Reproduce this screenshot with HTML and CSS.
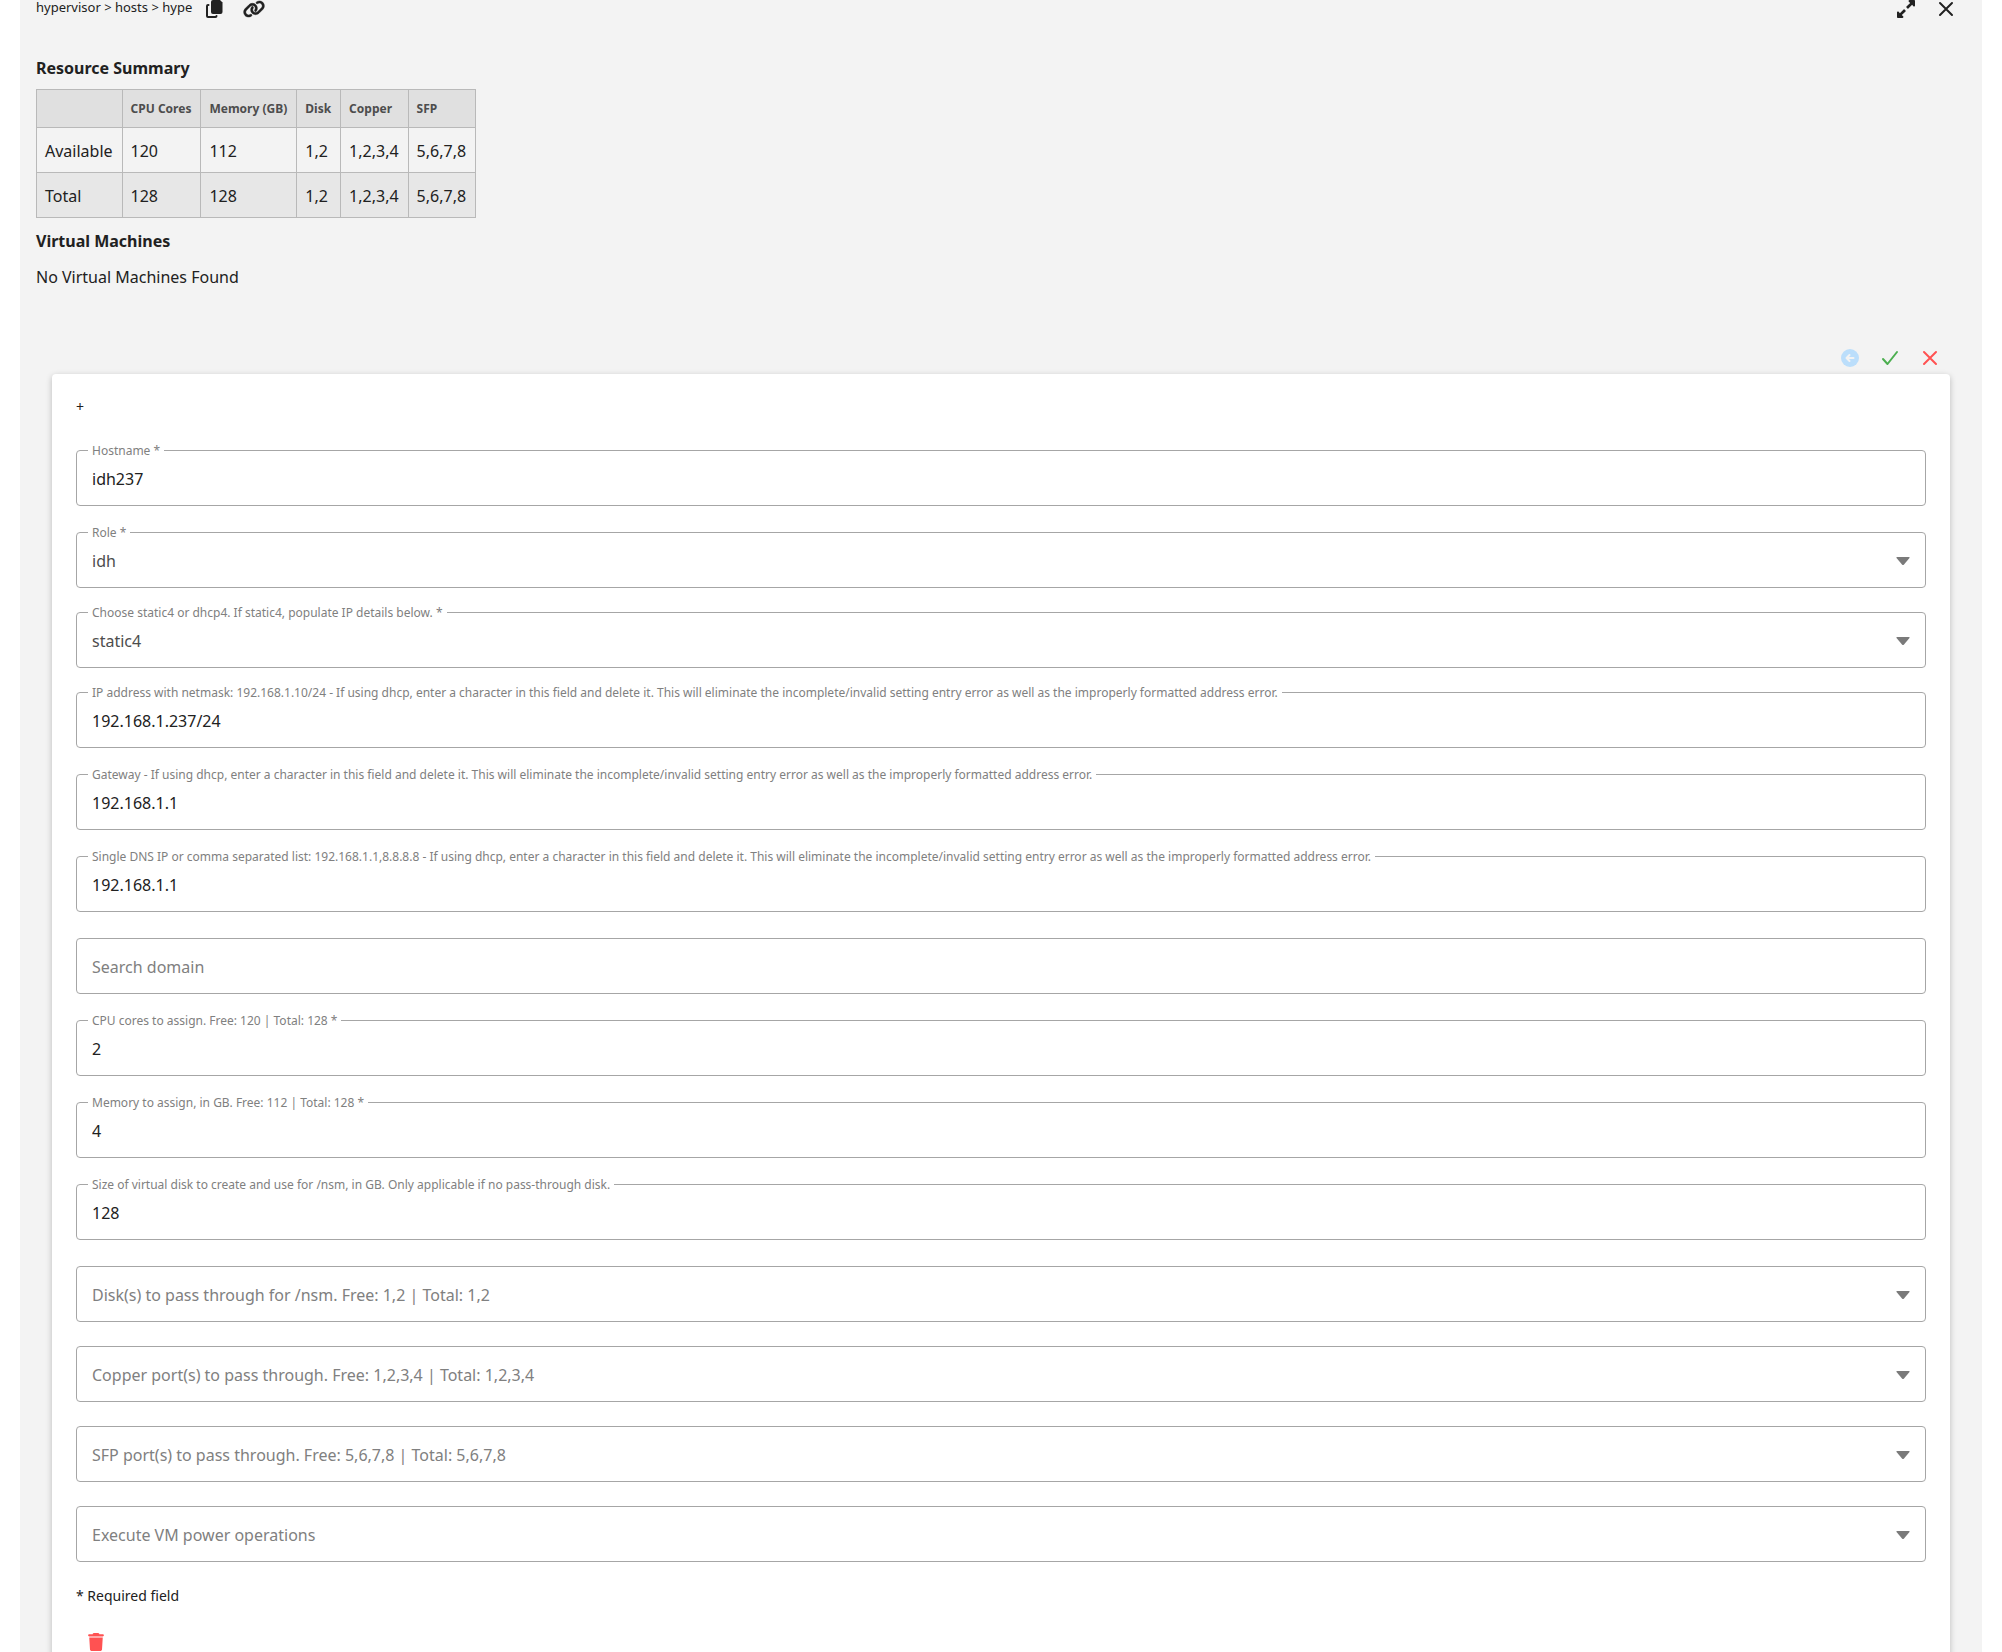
FILE: index.html
```html
<!DOCTYPE html>
<html lang="en">
<head>
  <meta charset="UTF-8">
  <meta name="viewport" content="width=device-width, initial-scale=1">
  <title>Hypervisor Configuration</title>
  <link rel="stylesheet" href="styles.css">
</head>
<body>
  <main class="panel">
    <header class="topbar">
      <span class="setting-path">hypervisor &gt; hosts &gt; hype</span>
      <button class="icon-btn" type="button" aria-label="Copy">
        <svg class="icon" viewBox="0 0 18 18"><path d="M8 0h7l2.500 2.500V12a2 2 0 0 1-2 2H8a2 2 0 0 1-2-2V2a2 2 0 0 1 2-2z"/><path class="stroke" d="M3.500 5H3a1 1 0 0 0-1 1v10a1 1 0 0 0 1 1h7.500a1 1 0 0 0 1-1"/></svg>
      </button>
      <button class="icon-btn" type="button" aria-label="Link">
        <svg class="icon icon-wide" viewBox="0 0 640 512"><path stroke="currentColor" stroke-width="12" d="M579.800 267.700c56.500-56.500 56.500-148 0-204.500c-50-50-128.800-56.500-186.300-15.400l-1.600 1.100c-14.400 10.300-17.700 30.300-7.400 44.600s30.300 17.700 44.600 7.400l1.600-1.100c32.100-22.900 76-19.300 103.800 8.600c31.500 31.500 31.500 82.500 0 114L422.300 334.800c-31.500 31.500-82.500 31.500-114 0c-27.900-27.900-31.500-71.800-8.600-103.800l1.100-1.600c10.300-14.400 6.900-34.400-7.400-44.600s-34.400-6.900-44.600 7.400l-1.100 1.600C206.500 251.200 213 330 263 380c56.500 56.500 148 56.500 204.500 0L579.800 267.700zM60.200 244.300c-56.500 56.500-56.500 148 0 204.500c50 50 128.800 56.500 186.300 15.400l1.600-1.100c14.400-10.300 17.700-30.300 7.400-44.600s-30.300-17.700-44.600-7.400l-1.600 1.100c-32.100 22.900-76 19.300-103.800-8.600C74 372 74 321 105.500 289.500L217.700 177.200c31.500-31.500 82.500-31.500 114 0c27.900 27.900 31.500 71.800 8.600 103.900l-1.100 1.600c-10.300 14.400-6.900 34.400 7.400 44.600s34.400 6.900 44.600-7.400l1.100-1.600C433.500 260.800 427 182 377 132c-56.500-56.500-148-56.500-204.500 0L60.200 244.300z"/></svg>
      </button>
      <span class="spacer"></span>
      <button class="icon-btn" type="button" aria-label="Expand">
        <svg class="icon" viewBox="0 32 448 448"><path d="M212.686 315.314L120 408l32.922 31.029c15.120 15.120 4.412 40.971-16.970 40.971h-112C10.697 480 0 469.255 0 456V344c0-21.382 25.803-32.090 40.922-16.971L72 360l92.686-92.686c6.248-6.248 16.379-6.248 22.627 0l25.373 25.373c6.249 6.248 6.249 16.378 0 22.627zm22.628-118.628L328 104l-32.922-31.029C279.958 57.851 290.666 32 312.048 32h112C437.303 32 448 42.745 448 56v112c0 21.382-25.803 32.090-40.922 16.971L376 152l-92.686 92.686c-6.248 6.248-16.379 6.248-22.627 0l-25.373-25.373c-6.249-6.248-6.249-16.378 0-22.627z"/></svg>
      </button>
      <button class="icon-btn" type="button" aria-label="Close">
        <svg class="icon" viewBox="0 0 18 18"><path class="stroke" d="M3 3l12 12M15 3L3 15"/></svg>
      </button>
    </header>

    <section class="summary">
      <h2>Resource Summary</h2>
      <table>
        <thead>
          <tr><th></th><th>CPU Cores</th><th>Memory (GB)</th><th>Disk</th><th>Copper</th><th>SFP</th></tr>
        </thead>
        <tbody>
          <tr><td>Available</td><td>120</td><td>112</td><td>1,2</td><td>1,2,3,4</td><td>5,6,7,8</td></tr>
          <tr><td>Total</td><td>128</td><td>128</td><td>1,2</td><td>1,2,3,4</td><td>5,6,7,8</td></tr>
        </tbody>
      </table>
      <h2>Virtual Machines</h2>
      <p>No Virtual Machines Found</p>
    </section>

    <div class="actions">
      <button class="icon-btn undo" type="button" aria-label="Undo" disabled>
        <svg class="icon" viewBox="0 0 18 18"><circle cx="9" cy="9" r="9"/><path class="undo-arrow" d="M12.500 9H6M8.500 6l-3 3 3 3"/></svg>
      </button>
      <button class="icon-btn save" type="button" aria-label="Save">
        <svg class="icon" viewBox="0 0 18 18"><path class="stroke" d="M2 10l4.500 5L16 3"/></svg>
      </button>
      <button class="icon-btn cancel" type="button" aria-label="Cancel">
        <svg class="icon" viewBox="0 0 18 18"><path class="stroke" d="M3 3l12 12M15 3L3 15"/></svg>
      </button>
    </div>

    <form class="card">
      <button class="add-btn" type="button" aria-label="Add">+</button>

      <div class="field">
        <input id="hostname" type="text" value="idh237">
        <label for="hostname">Hostname *</label>
      </div>
      <div class="field select">
        <select id="role"><option>idh</option></select>
        <label for="role">Role *</label>
        <svg class="arrow" viewBox="0 0 14 8"><path d="M1 0h12q1 0 .5 1L8 7.500q-1 1-2 0L.5 1Q0 0 1 0z"/></svg>
      </div>
      <div class="field select">
        <select id="network"><option>static4</option></select>
        <label for="network">Choose static4 or dhcp4. If static4, populate IP details below. *</label>
        <svg class="arrow" viewBox="0 0 14 8"><path d="M1 0h12q1 0 .5 1L8 7.500q-1 1-2 0L.5 1Q0 0 1 0z"/></svg>
      </div>
      <div class="field">
        <input id="ip" type="text" value="192.168.1.237/24">
        <label for="ip">IP address with netmask: 192.168.1.10/24 - If using dhcp, enter a character in this field and delete it. This will eliminate the incomplete/invalid setting entry error as well as the improperly formatted address error.</label>
      </div>
      <div class="field">
        <input id="gateway" type="text" value="192.168.1.1">
        <label for="gateway">Gateway - If using dhcp, enter a character in this field and delete it. This will eliminate the incomplete/invalid setting entry error as well as the improperly formatted address error.</label>
      </div>
      <div class="field">
        <input id="dns" type="text" value="192.168.1.1">
        <label for="dns">Single DNS IP or comma separated list: 192.168.1.1,8.8.8.8 - If using dhcp, enter a character in this field and delete it. This will eliminate the incomplete/invalid setting entry error as well as the improperly formatted address error.</label>
      </div>
      <div class="field empty">
        <input id="search" type="text">
        <label for="search">Search domain</label>
      </div>
      <div class="field">
        <input id="cpu" type="text" value="2">
        <label for="cpu">CPU cores to assign. Free: 120 | Total: 128 *</label>
      </div>
      <div class="field">
        <input id="memory" type="text" value="4">
        <label for="memory">Memory to assign, in GB. Free: 112 | Total: 128 *</label>
      </div>
      <div class="field">
        <input id="nsm" type="text" value="128">
        <label for="nsm">Size of virtual disk to create and use for /nsm, in GB. Only applicable if no pass-through disk.</label>
      </div>
      <div class="field select empty">
        <select id="disk"><option></option></select>
        <label for="disk">Disk(s) to pass through for /nsm. Free: 1,2 | Total: 1,2</label>
        <svg class="arrow" viewBox="0 0 14 8"><path d="M1 0h12q1 0 .5 1L8 7.500q-1 1-2 0L.5 1Q0 0 1 0z"/></svg>
      </div>
      <div class="field select empty">
        <select id="copper"><option></option></select>
        <label for="copper">Copper port(s) to pass through. Free: 1,2,3,4 | Total: 1,2,3,4</label>
        <svg class="arrow" viewBox="0 0 14 8"><path d="M1 0h12q1 0 .5 1L8 7.500q-1 1-2 0L.5 1Q0 0 1 0z"/></svg>
      </div>
      <div class="field select empty">
        <select id="sfp"><option></option></select>
        <label for="sfp">SFP port(s) to pass through. Free: 5,6,7,8 | Total: 5,6,7,8</label>
        <svg class="arrow" viewBox="0 0 14 8"><path d="M1 0h12q1 0 .5 1L8 7.500q-1 1-2 0L.5 1Q0 0 1 0z"/></svg>
      </div>
      <div class="field select empty">
        <select id="power"><option></option></select>
        <label for="power">Execute VM power operations</label>
        <svg class="arrow" viewBox="0 0 14 8"><path d="M1 0h12q1 0 .5 1L8 7.500q-1 1-2 0L.5 1Q0 0 1 0z"/></svg>
      </div>

      <p class="required">* Required field</p>
      <button class="icon-btn delete" type="button" aria-label="Delete">
        <svg class="icon" viewBox="0 0 448 512"><path d="M135.200 17.700L128 32H32C14.300 32 0 46.300 0 64S14.300 96 32 96H416c17.700 0 32-14.300 32-32s-14.300-32-32-32H320l-7.200-14.300C307.400 6.800 296.300 0 284.200 0H163.800c-12.100 0-23.200 6.800-28.600 17.700zM416 128H32L53.200 467c1.600 25.300 22.600 45 47.900 45H346.900c25.300 0 46.300-19.700 47.900-45L416 128z"/></svg>
      </button>
    </form>
  </main>
</body>
</html>
```
FILE: styles.css
```css
* {
  box-sizing: border-box;
}

body {
  margin: 0;
  background: #fff;
  color: #212121;
  font-family: "Noto Sans", sans-serif;
  font-size: 16px;
  line-height: 24px;
  overflow: hidden;
}

.panel {
  margin: 0 20px;
  background: #f3f3f3;
}

/* Top bar */
.topbar {
  display: flex;
  align-items: center;
  height: 18px;
  padding: 0 16px;
}

.setting-path {
  margin-right: 2px;
  padding-bottom: 4px;
  font-size: 13px;
}

.spacer {
  flex: 1;
}

.icon-btn {
  display: flex;
  align-items: center;
  justify-content: center;
  width: 40px;
  height: 40px;
  padding: 0;
  border: none;
  background: none;
  color: inherit;
  cursor: pointer;
}

.icon {
  width: 18px;
  height: 18px;
  fill: currentColor;
}

.icon-wide {
  width: 22px;
  overflow: visible;
}

.stroke {
  fill: none;
  stroke: currentColor;
  stroke-width: 2;
  stroke-linecap: round;
  stroke-linejoin: round;
}

/* Resource summary */
.summary {
  padding: 38px 16px 0;
}

h2 {
  margin: 0;
  font-size: 16px;
  font-weight: 700;
}

table {
  margin: 9px 0 11px;
  border-collapse: collapse;
}

th, td {
  padding: 11px 9px 9px 8px;
  border: 1px solid #b9b9b9;
  text-align: left;
}

th {
  padding-top: 10px;
  padding-bottom: 10px;
  background: #e0e0e0;
  color: #4d4d4d;
  font-size: 12px;
  line-height: 17px;
}

tbody tr:nth-child(even) {
  background: #e7e7e7;
}

.summary p {
  margin: 12px 0 0;
}

/* Save, undo and cancel */
.actions {
  display: flex;
  justify-content: flex-end;
  height: 36px;
  margin-top: 49px;
  padding-right: 32px;
}

.undo {
  color: #bbdefb;
}

.undo-arrow {
  fill: none;
  stroke: #f3f3f3;
  stroke-width: 2;
  stroke-linecap: round;
  stroke-linejoin: round;
}

.save {
  color: #4caf50;
}

.cancel {
  color: #ff5252;
}

/* Node form */
.card {
  margin: 0 32px;
  padding: 25px 24px 24px;
  border-radius: 4px;
  background: #fff;
  box-shadow: 0 2px 6px rgba(0, 0, 0, 0.24);
}

.add-btn {
  display: block;
  height: 16px;
  margin-bottom: 35px;
  padding: 0;
  border: none;
  background: none;
  color: inherit;
  font-family: inherit;
  font-size: 14px;
  line-height: 16px;
}

.field {
  position: relative;
  margin-bottom: 26px;
}

.field.select {
  margin-bottom: 24px;
}

.field input,
.field select {
  display: block;
  width: 100%;
  height: 56px;
  padding: 2px 15px 0;
  border: 1px solid #a6a6a6;
  border-radius: 4px;
  background: #fff;
  color: #212121;
  font-family: inherit;
  font-size: 16px;
  appearance: none;
}

.field select {
  color: #4d4d4d;
}

/* Label sits on the outline */
.field label {
  position: absolute;
  top: -7px;
  left: 12px;
  padding: 0 4px;
  background: #fff;
  color: #808080;
  font-size: 12px;
  line-height: 16px;
  white-space: nowrap;
}

.field.empty label {
  top: 17px;
  font-size: 16px;
  line-height: 24px;
  pointer-events: none;
}

.arrow {
  position: absolute;
  top: 25px;
  right: 16px;
  width: 14px;
  height: 8px;
  fill: #7a7a7a;
  pointer-events: none;
}

.required {
  margin: 0;
  font-size: 14px;
  line-height: 20px;
}

.delete {
  margin-top: 16px;
  color: #ff5252;
}
```
